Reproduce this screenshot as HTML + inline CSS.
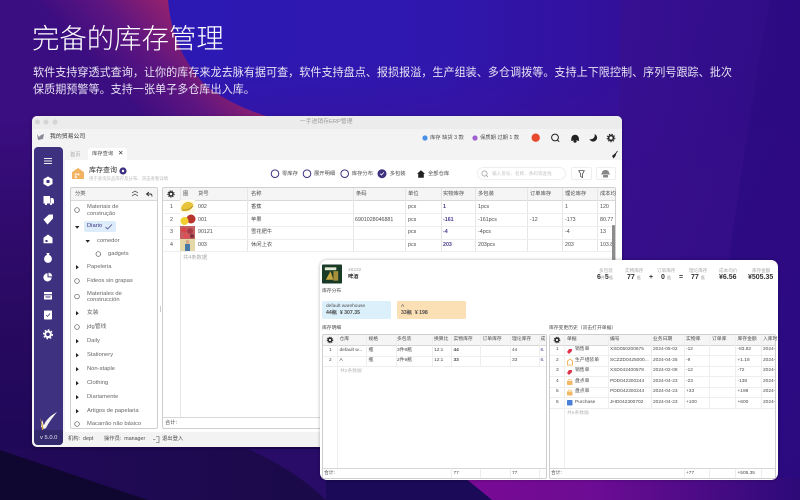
<!DOCTYPE html>
<html lang="zh"><head><meta charset="utf-8"><style>
html,body{margin:0;padding:0;width:800px;height:500px;overflow:hidden;background:#2a0a80}
body{position:relative;font-family:"Liberation Sans","Noto Sans CJK SC",sans-serif;color:#444}
#w{position:absolute;left:0;top:0;width:800px;height:500px;overflow:hidden;filter:blur(.3px)}
.a,.t{position:absolute}
.t{white-space:nowrap;font-size:5.3px;line-height:8px;height:8px;color:#4c4c4c}
.s{font-size:4.8px}
.b{font-weight:bold}.g{color:#aaa}.p{color:#4a3a90;font-weight:bold}
.l{position:absolute;background:#e6e6e6}
.m{background:#eee}
.tr{font-size:5.8px;color:#666;left:87px}
.n{font-size:7px;font-weight:bold;color:#333;top:274px}
.n span{font-size:4px;font-weight:normal;color:#999}
.k{font-size:4.6px;color:#aaa;top:267px}
svg{position:absolute;overflow:visible}
</style></head><body><div id="w">
<svg style="left:0;top:0" width="800" height="500" viewBox="0 0 800 500">
<defs>
<linearGradient id="bg" x1="0" y1="0" x2="1" y2="0"><stop offset="0" stop-color="#3a0f85"/><stop offset=".2" stop-color="#2c19b4"/><stop offset=".55" stop-color="#2f17ae"/><stop offset=".78" stop-color="#33109a"/><stop offset="1" stop-color="#2c0b88"/></linearGradient>
<linearGradient id="v" x1="0" y1="0" x2="0" y2="1"><stop offset="0" stop-color="#3f0e90" stop-opacity="0"/><stop offset=".3" stop-color="#3f0e90" stop-opacity=".7"/><stop offset="1" stop-color="#340c88" stop-opacity="1"/></linearGradient>
<linearGradient id="sw" gradientUnits="userSpaceOnUse" x1="95" y1="68" x2="168" y2="0"><stop offset="0" stop-color="#3a0d80"/><stop offset=".5" stop-color="#5e1580"/><stop offset="1" stop-color="#96226e"/></linearGradient>
<linearGradient id="dk" x1="0" y1="0" x2="0" y2="1"><stop offset="0" stop-color="#120530" stop-opacity="0"/><stop offset="1" stop-color="#1a0750" stop-opacity=".85"/></linearGradient>
<linearGradient id="bl" x1="0" y1="0" x2="1" y2="0"><stop offset="0" stop-color="#22095a"/><stop offset="1" stop-color="#1a0a48"/></linearGradient>
<linearGradient id="mg" x1="0" y1="0" x2="1" y2="0"><stop offset="0" stop-color="#7a0a95"/><stop offset=".4" stop-color="#6c0c94"/><stop offset="1" stop-color="#2c0a78"/></linearGradient>
<linearGradient id="rr" x1="0" y1="0" x2="1" y2="1"><stop offset="0" stop-color="#38108f"/><stop offset="1" stop-color="#2c0a7c"/></linearGradient>
</defs>
<rect width="800" height="500" fill="url(#bg)"/>
<rect x="170" y="60" width="630" height="440" fill="url(#v)"/>
<path d="M620 0H800V500H600Q620 240 620 0Z" fill="url(#rr)" opacity=".7"/>
<path d="M770 0H800V500H700Q730 220 770 0Z" fill="#2a0a80" opacity=".6"/>
<path d="M0 0H168Q172 50 205 85Q240 112 290 122L330 500H0Z" fill="url(#sw)"/>
<rect x="0" y="120" width="330" height="330" fill="url(#dk)"/>
<path d="M0 449H330V500H0Z" fill="#280c68"/>
<path d="M0 449H248Q295 470 326 500H0Z" fill="url(#bl)"/>
<path d="M0 450L148 500H0Z" fill="#100730"/>
<path d="M326 478H468L492 500H326Z" fill="#1a0a58"/>
<path d="M465 478H800V500H492Q480 490 465 478Z" fill="url(#mg)"/>
</svg>

<div class="t" style="left:32px;top:22px;font-size:27.4px;line-height:34px;height:34px;color:#fff;font-weight:300">完备的库存管理</div>
<div class="t" style="left:33px;top:64.500px;font-size:11.1px;line-height:16px;height:16px;color:#e8e4f4">软件支持穿透式查询，让你的库存来龙去脉有据可查，软件支持盘点、报损报溢，生产组装、多仓调拨等。支持上下限控制、序列号跟踪、批次</div>
<div class="t" style="left:33px;top:81.500px;font-size:11.1px;line-height:16px;height:16px;color:#e8e4f4">保质期预警等。支持一张单子多仓库出入库。</div>

<!-- main window -->
<div class="a" style="left:32px;top:116px;width:590px;height:331px;background:#f3f3f3;border-radius:5px;overflow:hidden;box-shadow:0 1px 3px rgba(0,0,0,.35)">
<div class="a" style="left:0;top:0;width:590px;height:13px;background:#ececec"></div>
<div class="a" style="left:33px;top:44px;width:557px;height:272px;background:#fff"></div>
</div>
<svg style="left:0;top:0" width="800" height="500"><circle cx="37.500" cy="122" r="2.500" fill="#d4d4d4"/><circle cx="46" cy="122" r="2.500" fill="#d4d4d4"/><circle cx="55" cy="122" r="2.500" fill="#d4d4d4"/></svg>
<div class="t g" style="left:300px;top:118px;color:#999;font-size:5.800px">一手进销存ERP管理</div>
<svg style="left:36px;top:133px" width="9" height="8" viewBox="0 0 9 8"><path d="M1 1L3 4L5 2L8 1L7 6L2 7Z" fill="#8a8a9a"/></svg>
<div class="t" style="left:50px;top:133px;font-size:5.900px;color:#333">我的贸易公司</div>
<svg style="left:0;top:0" width="800" height="500">
<circle cx="425" cy="138" r="2.600" fill="#4a90e8"/><circle cx="475" cy="138" r="2.600" fill="#a060d0"/>
<circle cx="535.700" cy="137.700" r="4.200" fill="#e8492e"/>
<circle cx="555" cy="137.500" r="3.400" fill="none" stroke="#222" stroke-width="1"/><path d="M557.500 140L559.200 141.800" stroke="#222" stroke-width="1"/>
<path d="M571.300 138.500a3.800 3.800 0 0 1 7.600 0v2.500h-1.500v-1h-4.600v1h-1.500Z" fill="#222"/><circle cx="575" cy="141" r="1.700" fill="#222"/>
<path d="M594.500 134a3.900 3.900 0 1 1-5 5a3.900 3.900 0 0 0 5-5Z" fill="#222"/>
<circle cx="611" cy="138" r="2.400" fill="none" stroke="#222" stroke-width="1.600"/><circle cx="611" cy="138" r="3.800" fill="none" stroke="#222" stroke-width="1" stroke-dasharray="1.400 1.200"/>
<path d="M612 156l3-2.500 1.500-1-1 3.500-2 2.500Z" fill="#222"/><path d="M615 154.500l2.500-3.500" stroke="#222" stroke-width=".8"/>
</svg>
<div class="t" style="left:430px;top:134px">库存 缺货 3 款</div>
<div class="t" style="left:480px;top:134px">保质期 过期 1 款</div>

<!-- sidebar -->
<div class="a" style="left:34px;top:147px;width:29px;height:298px;background:#3e3280;border-radius:4px"></div>
<div class="a" style="left:34px;top:430px;width:29px;height:15px;background:#332a6e;border-radius:0 0 4px 4px"></div>
<svg style="left:34px;top:147px" width="29" height="298" viewBox="34 147 29 298" fill="#fff">
<path d="M44 158.500h8M44 161h8M44 163.500h8" stroke="#eee" stroke-width="1"/>
<path d="M48 176.500l4.500 2.500v5l-4.500 2.500-4.500-2.500v-5Z"/><rect x="46.500" y="180" width="3" height="3" fill="#3e3280"/>
<path d="M43.500 196h6.500v7.500h-6.500ZM50.500 198h2.500l1 2v3.500h-3.500Z"/><circle cx="46" cy="204" r="1.100"/><circle cx="51" cy="204" r="1.100"/>
<path d="M43.500 219.500l5.500-5h4v4l-5.500 6Z"/>
<path d="M48 234.500l4.500 3.300v5.400h-9v-5.400Z"/><rect x="45.500" y="240" width="2" height="2" fill="#3e3280"/>
<path d="M46.300 253h3.400l-.8 1.700c2.200 1 3 2.700 3 4.300a3.900 3.900 0 0 1-7.800 0c0-1.600.8-3.300 3-4.300Z"/>
<path d="M47.500 273.300a4.100 4.100 0 1 0 4.100 4.100h-4.100Z"/><path d="M48.500 272.600a4 4 0 0 1 3.700 3.800h-3.700Z"/>
<path d="M44 292h8v2.200h-8ZM44 295.200h8v4.300h-8Z"/><rect x="45.500" y="296.500" width="5" height="1" fill="#3e3280"/>
<rect x="44" y="310.500" width="8" height="9" rx=".7"/><path d="M46 315l1.500 1.500 2.500-3" stroke="#3e3280" fill="none" stroke-width=".7"/>
<circle cx="48" cy="334.300" r="2.800" fill="none" stroke="#fff" stroke-width="2"/><circle cx="48" cy="334.300" r="4.400" fill="none" stroke="#fff" stroke-width="1.300" stroke-dasharray="1.700 1.700"/>
<path d="M41 427c0-3 1-5 2-7 0 3 .2 4.500 1 5 2-5 6-9 13-13-4 5-8 10-11 16l-2 1c-1-1-2-1.500-3-2Z" fill="#f3f3f3"/>
<path d="M40 418c1 3 2 9 2 12l1.500-.5c0-3-1.500-8-3.500-11.500Z" fill="#d6a94a"/>
</svg>
<div class="t" style="left:40px;top:434px;color:#e8e8f0;font-size:5.800px">v 5.0.0</div>

<!-- tabs -->
<div class="t g" style="left:70px;top:151px">首页</div>
<div class="a" style="left:88px;top:148px;width:39px;height:12px;background:#fff;border-radius:3px 3px 0 0"></div>
<div class="t" style="left:92px;top:150px">库存查询</div>
<div class="t" style="left:118px;top:150px;font-size:6.500px;color:#333">✕</div>

<!-- heading -->
<svg style="left:71.500px;top:168px" width="12" height="11" viewBox="0 0 13 12"><path d="M6.500 0L13 4.500V12H0V4.500Z" fill="#f2b15e"/><rect x="3" y="6" width="2" height="2" fill="#fff"/><rect x="6" y="6" width="2" height="2" fill="#fff"/><rect x="3" y="9" width="2" height="2" fill="#fff"/></svg>
<div class="t" style="left:89px;top:166px;font-size:7px;line-height:10px;height:10px;color:#333">库存查询</div>
<svg style="left:119px;top:167px" width="8" height="8"><circle cx="4" cy="4" r="3.600" fill="#3e3280"/><circle cx="4" cy="4" r="1.200" fill="#fff"/></svg>
<div class="t g" style="left:89px;top:175px;font-size:4.400px;color:#bbb">用于查询货品库存及分布、双击查看详情</div>

<!-- options -->
<svg style="left:0;top:0" width="800" height="500" fill="none" stroke="#3e3280" stroke-width="1">
<circle cx="275" cy="173.700" r="3.800"/><circle cx="307" cy="173.700" r="3.800"/><circle cx="344.700" cy="173.700" r="3.800"/>
<circle cx="382" cy="173.700" r="4" fill="#3e3280"/><path d="M380.200 173.700l1.300 1.300 2.300-2.600" stroke="#fff" stroke-width=".8"/>
<path d="M417 173.700l4-3.500 4 3.500h-1.200v4h-5.600v-4Z" fill="#222" stroke="none"/>
</svg>
<div class="t" style="left:282px;top:170px">零库存</div>
<div class="t" style="left:314px;top:170px">展开明细</div>
<div class="t" style="left:351.700px;top:170px">库存分布</div>
<div class="t" style="left:389.700px;top:170px">多包装</div>
<div class="t" style="left:428px;top:170px">全部仓库</div>
<div class="a" style="left:477px;top:167px;width:89px;height:13px;border:1px solid #eee;border-radius:7px;box-sizing:border-box"></div>
<svg style="left:481px;top:170px" width="8" height="8" fill="none" stroke="#999" stroke-width=".7"><circle cx="3.500" cy="3.500" r="2.600"/><path d="M5.500 5.500L7 7"/></svg>
<div class="t" style="left:492px;top:170px;font-size:4.600px;color:#c4c4c4">输入货号、名称、条码等查找</div>
<div class="a" style="left:571px;top:167px;width:21px;height:13px;border:1px solid #eee;border-radius:2px;box-sizing:border-box"></div>
<div class="a" style="left:596px;top:167px;width:20px;height:13px;border:1px solid #eee;border-radius:2px;box-sizing:border-box"></div>
<svg style="left:578px;top:169.500px" width="8" height="9" fill="none" stroke="#333" stroke-width=".7"><path d="M.7.700H6.300L4.500 4V7.500L2.700 6.500V4Z"/></svg>
<svg style="left:601px;top:169.500px" width="9" height="8" fill="#888"><path d="M1 2.500a3.500 2.500 0 0 1 7 0v1H1Z"/><rect x="0" y="3.500" width="9" height="1"/><rect x="2" y="5" width="5" height="2.500" rx=".5"/></svg>

<!-- tree panel -->
<div class="a" style="left:70px;top:187px;width:88px;height:242px;background:#fff;border:1px solid #cfcfcf;border-radius:2px;box-sizing:border-box"></div>
<div class="a" style="left:71px;top:188px;width:86px;height:12px;background:#f5f5f5;border-bottom:1px solid #d8d8d8"></div>
<div class="t" style="left:75px;top:190px">分类</div>
<svg style="left:0;top:0" width="800" height="500" fill="none" stroke="#333" stroke-width=".7">
<path d="M132 193l3-2 3 2M132 196l3-2 3 2"/>
<path d="M149 192l-2.500 2 2.500 2M147 194h3.500q1.500 0 1.500 2.500" stroke-width=".9"/>
<g stroke="#555"><circle cx="77" cy="210" r="2.300"/><circle cx="98.300" cy="254" r="2.300"/><circle cx="77" cy="281" r="2.300"/><circle cx="77" cy="296.500" r="2.300"/><circle cx="77" cy="327" r="2.300"/><circle cx="77" cy="424" r="2.300"/></g>
<g fill="#222" stroke="none"><path d="M75 226l4.400 0-2.200 2.800Z"/><path d="M85.500 240l4.400 0-2.200 2.800Z"/>
<path d="M76 265l2.800 2.200-2.800 2.200Z"/><path d="M76 311l2.800 2.200-2.800 2.200Z"/><path d="M76 339l2.800 2.200-2.800 2.200Z"/><path d="M76 353l2.800 2.200-2.800 2.200Z"/><path d="M76 367l2.800 2.200-2.800 2.200Z"/><path d="M76 381l2.800 2.200-2.800 2.200Z"/><path d="M76 395l2.800 2.200-2.800 2.200Z"/><path d="M76 409l2.800 2.200-2.800 2.200Z"/></g>
</svg>
<div class="a" style="left:84px;top:221px;width:32px;height:11px;background:#dcecfb;border-radius:2px"></div>
<svg style="left:105px;top:224px" width="8" height="6" fill="none" stroke="#3e3280" stroke-width=".7"><path d="M.5 3l2 2L7 .5"/></svg>
<div class="t tr" style="top:203px">Materiais de</div>
<div class="t tr" style="top:209.500px">construção</div>
<div class="t tr" style="top:222px;color:#3e3280">Diario</div>
<div class="t tr" style="top:237px;left:97px">comedor</div>
<div class="t tr" style="top:250px;left:108px">gadgets</div>
<div class="t tr" style="top:263px">Papeleria</div>
<div class="t tr" style="top:277px">Fideos sin grapas</div>
<div class="t tr" style="top:289.500px">Materiales de</div>
<div class="t tr" style="top:296px">construcción</div>
<div class="t tr" style="top:309px">女装</div>
<div class="t tr" style="top:323px">jdg管线</div>
<div class="t tr" style="top:337px">Daily</div>
<div class="t tr" style="top:351px">Stationery</div>
<div class="t tr" style="top:365px">Non-staple</div>
<div class="t tr" style="top:379px">Clothing</div>
<div class="t tr" style="top:393px">Diariamente</div>
<div class="t tr" style="top:407px">Artigos de papelaria</div>
<div class="t tr" style="top:420px">Macarrão não básico</div>
<div class="a" style="left:159.500px;top:306px;width:1px;height:6px;background:#ccc"></div>

<!-- main table -->
<div class="a" style="left:162px;top:187px;width:454px;height:242px;background:#fff;border:1px solid #cfcfcf;border-radius:2px;box-sizing:border-box"></div>
<div class="a" style="left:163px;top:188px;width:452px;height:12px;background:#f5f5f5;border-bottom:1px solid #d8d8d8"></div>
<div class="l" style="left:179.500px;top:188px;width:1px;height:229px"></div>
<div class="l" style="left:247px;top:188px;width:1px;height:63px"></div>
<div class="l" style="left:353px;top:188px;width:1px;height:63px"></div>
<div class="l" style="left:405px;top:188px;width:1px;height:63px"></div>
<div class="l" style="left:441px;top:188px;width:1px;height:63px"></div>
<div class="l" style="left:475px;top:188px;width:1px;height:63px"></div>
<div class="l" style="left:527px;top:188px;width:1px;height:63px"></div>
<div class="l" style="left:562px;top:188px;width:1px;height:63px"></div>
<div class="l" style="left:597px;top:188px;width:1px;height:63px"></div>
<div class="l m" style="left:163px;top:213px;width:452px;height:1px"></div>
<div class="l m" style="left:163px;top:226px;width:452px;height:1px"></div>
<div class="l m" style="left:163px;top:238.500px;width:452px;height:1px"></div>
<div class="l m" style="left:163px;top:251px;width:452px;height:1px"></div>
<div class="l" style="left:163px;top:417px;width:452px;height:1px;background:#d8d8d8"></div>
<svg style="left:167px;top:190px" width="8" height="8" fill="none" stroke="#222"><circle cx="4" cy="4" r="2" stroke-width="1.400"/><circle cx="4" cy="4" r="3.200" stroke-width=".9" stroke-dasharray="1.200 1"/></svg>
<div class="t" style="left:183px;top:190px">图</div><div class="t" style="left:198px;top:190px">货号</div><div class="t" style="left:251px;top:190px">名称</div><div class="t" style="left:356px;top:190px">条码</div><div class="t" style="left:408px;top:190px">单位</div><div class="t" style="left:443px;top:190px">实物库存</div><div class="t" style="left:478px;top:190px">多包装</div><div class="t" style="left:530px;top:190px">订单库存</div><div class="t" style="left:565px;top:190px">理论库存</div><div class="t" style="left:600px;top:190px">成本均</div>
<svg style="left:180px;top:200px" width="16" height="51" viewBox="0 0 16 51">
<rect width="15" height="13" fill="#fffbe8"/><path d="M1 8c2-6 8-8 12-4 1 4-4 8-9 7-2 0-3-1-3-3Z" fill="#e8c43a"/><path d="M2 10q6 1 11-4" stroke="#a88a20" stroke-width=".8" fill="none"/>
<rect y="13" width="15" height="13" fill="#fff"/><circle cx="11" cy="19" r="4.500" fill="#b8352e"/><circle cx="4.500" cy="21" r="4" fill="#f0d030"/>
<rect y="26" width="15" height="13" fill="#c46060"/><circle cx="4" cy="30" r="2.600" fill="#d8444a"/><circle cx="10" cy="31" r="3" fill="#a83a48"/><circle cx="6" cy="36" r="2.600" fill="#e04e58"/><circle cx="12" cy="36" r="2" fill="#803040"/>
<rect y="39" width="15" height="12" fill="#e4d8a8"/><circle cx="7.500" cy="42" r="2" fill="#d8a888"/><rect x="5" y="44" width="5" height="7" fill="#4a78a8"/>
</svg>
<div class="t" style="left:170px;top:202.700px">1</div><div class="t" style="left:170px;top:215.500px">2</div><div class="t" style="left:170px;top:228.300px">3</div><div class="t" style="left:170px;top:240.700px">4</div>
<div class="t" style="left:198px;top:202.700px">002</div><div class="t" style="left:198px;top:215.500px">001</div><div class="t" style="left:198px;top:228.300px">90121</div><div class="t" style="left:198px;top:240.700px">003</div>
<div class="t" style="left:251px;top:202.700px">香蕉</div><div class="t" style="left:251px;top:215.500px">苹果</div><div class="t" style="left:251px;top:228.300px">雪花肥牛</div><div class="t" style="left:251px;top:240.700px">休闲上衣</div>
<div class="t" style="left:355px;top:215.500px">6901028046881</div>
<div class="t" style="left:408px;top:202.700px">pcs</div><div class="t" style="left:408px;top:215.500px">pcs</div><div class="t" style="left:408px;top:228.300px">pcs</div><div class="t" style="left:408px;top:240.700px">pcs</div>
<div class="t p" style="left:443px;top:202.700px">1</div><div class="t p" style="left:443px;top:215.500px">-161</div><div class="t p" style="left:443px;top:228.300px">-4</div><div class="t p" style="left:443px;top:240.700px">203</div>
<div class="t" style="left:478px;top:202.700px">1pcs</div><div class="t" style="left:478px;top:215.500px">-161pcs</div><div class="t" style="left:478px;top:228.300px">-4pcs</div><div class="t" style="left:478px;top:240.700px">203pcs</div>
<div class="t" style="left:530px;top:215.500px">-12</div>
<div class="t" style="left:565px;top:202.700px">1</div><div class="t" style="left:565px;top:215.500px">-173</div><div class="t" style="left:565px;top:228.300px">-4</div><div class="t" style="left:565px;top:240.700px">203</div>
<div class="t" style="left:600px;top:202.700px">120</div><div class="t" style="left:600px;top:215.500px">80.77</div><div class="t" style="left:600px;top:228.300px">13</div><div class="a" style="left:600px;top:240.700px;width:15px;height:8px;overflow:hidden"><div class="t" style="left:0;top:0">103.86</div></div>
<div class="a" style="left:612px;top:225px;width:2.500px;height:35px;background:#8c8c8c;border-radius:1px"></div>
<div class="t g" style="left:183px;top:254px">共4条数据</div>
<div class="t" style="left:165px;top:419px">合计:</div>
<div class="t" style="left:68px;top:435px">机构:&nbsp; dept</div>
<div class="t" style="left:104px;top:435px">操作员:&nbsp; manager</div>
<svg style="left:153px;top:436px" width="7" height="7" fill="none" stroke="#555" stroke-width=".6"><path d="M3 .500h3v6H3M0 3.500h2.500"/></svg>
<div class="t" style="left:162px;top:435px">退出登入</div>

<!-- popup -->
<div class="a" style="left:320px;top:260px;width:458px;height:220px;background:#fff;border-radius:7px;box-shadow:0 0 3px rgba(0,0,0,.3)"></div>
<svg style="left:322px;top:264px" width="20" height="20" viewBox="0 0 21 20"><rect width="21" height="20" rx="1" fill="#1a3a28"/><path d="M4 16l5-9 3 9Z" fill="#c8a840"/><rect x="12" y="7" width="5" height="10" fill="#a8903a"/><rect x="3" y="3" width="12" height="3" fill="#dfe8d0"/></svg>
<div class="t g" style="left:348px;top:266.500px;font-size:4.800px">48232</div>
<div class="t" style="left:348px;top:272.500px;font-size:5.200px;color:#333;font-weight:bold">啤酒</div>
<div class="t s" style="left:322px;top:288px">库存分布</div>
<div class="a" style="left:322px;top:301px;width:69px;height:18px;background:#dcf0fb;border-radius:1.500px"></div>
<div class="a" style="left:397px;top:301px;width:69px;height:18px;background:#fbe0b6;border-radius:1.500px"></div>
<div class="t s" style="left:326px;top:302.500px">default warehouse</div>
<div class="t b" style="left:326px;top:309px;font-size:5.200px">44瓶&nbsp; ¥ 307.35</div>
<div class="t s" style="left:401px;top:302.500px">A</div>
<div class="t b" style="left:401px;top:309px;font-size:5.200px">33瓶&nbsp; ¥ 198</div>
<div class="t s" style="left:322px;top:325px">库存明细</div>
<div class="t s" style="left:549px;top:325px">库存变更历史（双击打开单据）</div>

<div class="t k" style="left:599px">多包装</div><div class="t k" style="left:625px">实物库存</div><div class="t k" style="left:657px">订单库存</div><div class="t k" style="left:689px">理论库存</div><div class="t k" style="left:719px">成本均价</div><div class="t k" style="left:752px">库存金额</div>
<div class="t n" style="left:597px">6<span>件</span>5<span>瓶</span></div>
<div class="t n" style="left:627px">77 <span>瓶</span></div>
<div class="t n" style="left:649px">+</div>
<div class="t n" style="left:661px">0 <span>瓶</span></div>
<div class="t n" style="left:679px">=</div>
<div class="t n" style="left:691px">77 <span>瓶</span></div>
<div class="t n" style="left:719px">¥6.56</div>
<div class="t n" style="left:748px">¥505.35</div>

<!-- left sub table -->
<div class="a" style="left:322px;top:334px;width:225px;height:145px;background:#fff;border:1px solid #cfcfcf;border-radius:2px;box-sizing:border-box"></div>
<div class="a" style="left:323px;top:335px;width:223px;height:10px;background:#f5f5f5;border-bottom:1px solid #d8d8d8"></div>
<div class="l m" style="left:337px;top:335px;width:1px;height:133px"></div>
<div class="l m" style="left:365.500px;top:335px;width:1px;height:31px"></div>
<div class="l m" style="left:395.500px;top:335px;width:1px;height:31px"></div>
<div class="l m" style="left:432px;top:335px;width:1px;height:31px"></div>
<div class="l m" style="left:451px;top:335px;width:1px;height:31px"></div>
<div class="l m" style="left:480px;top:335px;width:1px;height:31px"></div>
<div class="l m" style="left:509.500px;top:335px;width:1px;height:31px"></div>
<div class="l m" style="left:539px;top:335px;width:1px;height:31px"></div>
<div class="l m" style="left:323px;top:355.500px;width:223px;height:1px"></div>
<div class="l m" style="left:323px;top:366px;width:223px;height:1px"></div>
<div class="l" style="left:323px;top:468px;width:223px;height:1px;background:#d8d8d8"></div>
<svg style="left:326px;top:336px" width="8" height="8" fill="none" stroke="#222"><circle cx="4" cy="4" r="1.800" stroke-width="1.300"/><circle cx="4" cy="4" r="2.900" stroke-width=".8" stroke-dasharray="1.100 .9"/></svg>
<div class="t s" style="left:339.500px;top:335.500px">仓库</div><div class="t s" style="left:368.500px;top:335.500px">规格</div><div class="t s" style="left:397px;top:335.500px">多包装</div><div class="t s" style="left:434px;top:335.500px">换算比</div><div class="t s" style="left:453.500px;top:335.500px">实物库存</div><div class="t s" style="left:482.500px;top:335.500px">订单库存</div><div class="t s" style="left:512px;top:335.500px">理论库存</div><div class="t s" style="left:540.500px;top:335.500px">成</div>
<div class="t s" style="left:329px;top:346.500px">1</div><div class="t s" style="left:339.500px;top:346.500px">default w...</div><div class="t s" style="left:368.500px;top:346.500px">瓶</div><div class="t s" style="left:397px;top:346.500px">3件8瓶</div><div class="t s" style="left:434px;top:346.500px">12:1</div><div class="t s b" style="left:453.500px;top:346.500px">44</div><div class="t s" style="left:512px;top:346.500px">44</div><div class="t s" style="left:540.500px;top:346.500px;color:#4a3a90">6.</div>
<div class="t s" style="left:329px;top:357px">2</div><div class="t s" style="left:339.500px;top:357px">A</div><div class="t s" style="left:368.500px;top:357px">瓶</div><div class="t s" style="left:397px;top:357px">2件9瓶</div><div class="t s" style="left:434px;top:357px">12:1</div><div class="t s b" style="left:453.500px;top:357px">33</div><div class="t s" style="left:512px;top:357px">33</div><div class="t s" style="left:540.500px;top:357px;color:#4a3a90">6.</div>
<div class="t s" style="left:340px;top:367.500px;color:#bbb">共2条数据</div>
<div class="t s" style="left:324px;top:470px">合计:</div><div class="t s" style="left:453.500px;top:470px">77</div><div class="t s" style="left:512px;top:470px">77</div>
<div class="l m" style="left:451px;top:469px;width:1px;height:9px"></div><div class="l m" style="left:480px;top:469px;width:1px;height:9px"></div><div class="l m" style="left:509.500px;top:469px;width:1px;height:9px"></div><div class="l m" style="left:539px;top:469px;width:1px;height:9px"></div>

<!-- right sub table -->
<div class="a" style="left:549px;top:334px;width:227px;height:145px;background:#fff;border:1px solid #cfcfcf;border-radius:2px;box-sizing:border-box"></div>
<div class="a" style="left:550px;top:335px;width:225px;height:10px;background:#f5f5f5;border-bottom:1px solid #d8d8d8"></div>
<div class="l m" style="left:564px;top:335px;width:1px;height:133px"></div>
<div class="l m" style="left:608px;top:335px;width:1px;height:73px"></div>
<div class="l m" style="left:651px;top:335px;width:1px;height:73px"></div>
<div class="l m" style="left:684px;top:335px;width:1px;height:73px"></div>
<div class="l m" style="left:709px;top:335px;width:1px;height:73px"></div>
<div class="l m" style="left:735px;top:335px;width:1px;height:73px"></div>
<div class="l m" style="left:760.500px;top:335px;width:1px;height:73px"></div>
<div class="l m" style="left:550px;top:355px;width:225px;height:1px"></div><div class="l m" style="left:550px;top:366px;width:225px;height:1px"></div><div class="l m" style="left:550px;top:376px;width:225px;height:1px"></div><div class="l m" style="left:550px;top:387px;width:225px;height:1px"></div><div class="l m" style="left:550px;top:397px;width:225px;height:1px"></div><div class="l m" style="left:550px;top:408px;width:225px;height:1px"></div>
<div class="l" style="left:550px;top:468px;width:225px;height:1px;background:#d8d8d8"></div>
<svg style="left:553px;top:336px" width="8" height="8" fill="none" stroke="#222"><circle cx="4" cy="4" r="1.800" stroke-width="1.300"/><circle cx="4" cy="4" r="2.900" stroke-width=".8" stroke-dasharray="1.100 .9"/></svg>
<div class="t s" style="left:567px;top:335.500px">单据</div><div class="t s" style="left:610px;top:335.500px">编号</div><div class="t s" style="left:653px;top:335.500px">业务日期</div><div class="t s" style="left:686px;top:335.500px">实物库</div><div class="t s" style="left:712px;top:335.500px">订单库</div><div class="t s" style="left:737.500px;top:335.500px">库存金额</div><div class="t s" style="left:763px;top:335.500px">入库时</div>
<svg style="left:0;top:0" width="800" height="500">
<path d="M567 352l2-3h3v2l-3 3Z" fill="#e0344a"/><path d="M567 373l2-3h3v2l-3 3Z" fill="#e0344a"/>
<path d="M567.500 361l2.500-2 2.500 2v4h-5Z" fill="none" stroke="#f0a840" stroke-width=".8"/>
<rect x="567" y="381" width="5.500" height="4" rx=".5" fill="#f2b866"/><path d="M568 381a1.700 1.500 0 0 1 3.500 0" fill="none" stroke="#f2b866" stroke-width=".7"/>
<rect x="567" y="391.500" width="5.500" height="4" rx=".5" fill="#f2b866"/><path d="M568 391.500a1.700 1.500 0 0 1 3.500 0" fill="none" stroke="#f2b866" stroke-width=".7"/>
<rect x="567" y="400" width="5.500" height="5.500" rx=".7" fill="#4a80d8"/>
</svg>
<div class="t s" style="left:556px;top:346px">1</div><div class="t s" style="left:575px;top:346px">销售单</div><div class="t s" style="left:610px;top:346px">XSD050200675</div><div class="t s" style="left:653px;top:346px">2024-05-02</div><div class="t s" style="left:686px;top:346px">-12</div><div class="t s" style="left:737.500px;top:346px">-83.82</div><div class="t s" style="left:763px;top:346px">2024-</div>
<div class="t s" style="left:556px;top:357px">2</div><div class="t s" style="left:575px;top:357px">生产组装单</div><div class="t s" style="left:610px;top:357px">SCZZD0425000...</div><div class="t s" style="left:653px;top:357px">2024-04-25</div><div class="t s" style="left:686px;top:357px">-9</div><div class="t s" style="left:737.500px;top:357px">+1.18</div><div class="t s" style="left:763px;top:357px">2024-</div>
<div class="t s" style="left:556px;top:367px">3</div><div class="t s" style="left:575px;top:367px">销售单</div><div class="t s" style="left:610px;top:367px">XSD042400578</div><div class="t s" style="left:653px;top:367px">2024-02-08</div><div class="t s" style="left:686px;top:367px">-12</div><div class="t s" style="left:737.500px;top:367px">-72</div><div class="t s" style="left:763px;top:367px">2024-</div>
<div class="t s" style="left:556px;top:378px">4</div><div class="t s" style="left:575px;top:378px">盘点单</div><div class="t s" style="left:610px;top:378px">PDD042300244</div><div class="t s" style="left:653px;top:378px">2024-04-23</div><div class="t s" style="left:686px;top:378px">-23</div><div class="t s" style="left:737.500px;top:378px">-138</div><div class="t s" style="left:763px;top:378px">2024-</div>
<div class="t s" style="left:556px;top:388px">5</div><div class="t s" style="left:575px;top:388px">盘点单</div><div class="t s" style="left:610px;top:388px">PDD042300244</div><div class="t s" style="left:653px;top:388px">2024-04-23</div><div class="t s" style="left:686px;top:388px">+33</div><div class="t s" style="left:737.500px;top:388px">+198</div><div class="t s" style="left:763px;top:388px">2024-</div>
<div class="t s" style="left:556px;top:399px">6</div><div class="t s" style="left:575px;top:399px">Purchase</div><div class="t s" style="left:610px;top:399px">JHD042300702</div><div class="t s" style="left:653px;top:399px">2024-04-23</div><div class="t s" style="left:686px;top:399px">+100</div><div class="t s" style="left:737.500px;top:399px">+600</div><div class="t s" style="left:763px;top:399px">2024-</div>
<div class="t s" style="left:567px;top:409.500px;color:#bbb">共6条数据</div>
<div class="t s" style="left:551px;top:470px">合计:</div><div class="t s" style="left:686px;top:470px">+77</div><div class="t s" style="left:737.500px;top:470px">+505.35</div>
<div class="l m" style="left:684px;top:469px;width:1px;height:9px"></div><div class="l m" style="left:709px;top:469px;width:1px;height:9px"></div><div class="l m" style="left:735px;top:469px;width:1px;height:9px"></div><div class="l m" style="left:760.500px;top:469px;width:1px;height:9px"></div>
</div></body></html>
